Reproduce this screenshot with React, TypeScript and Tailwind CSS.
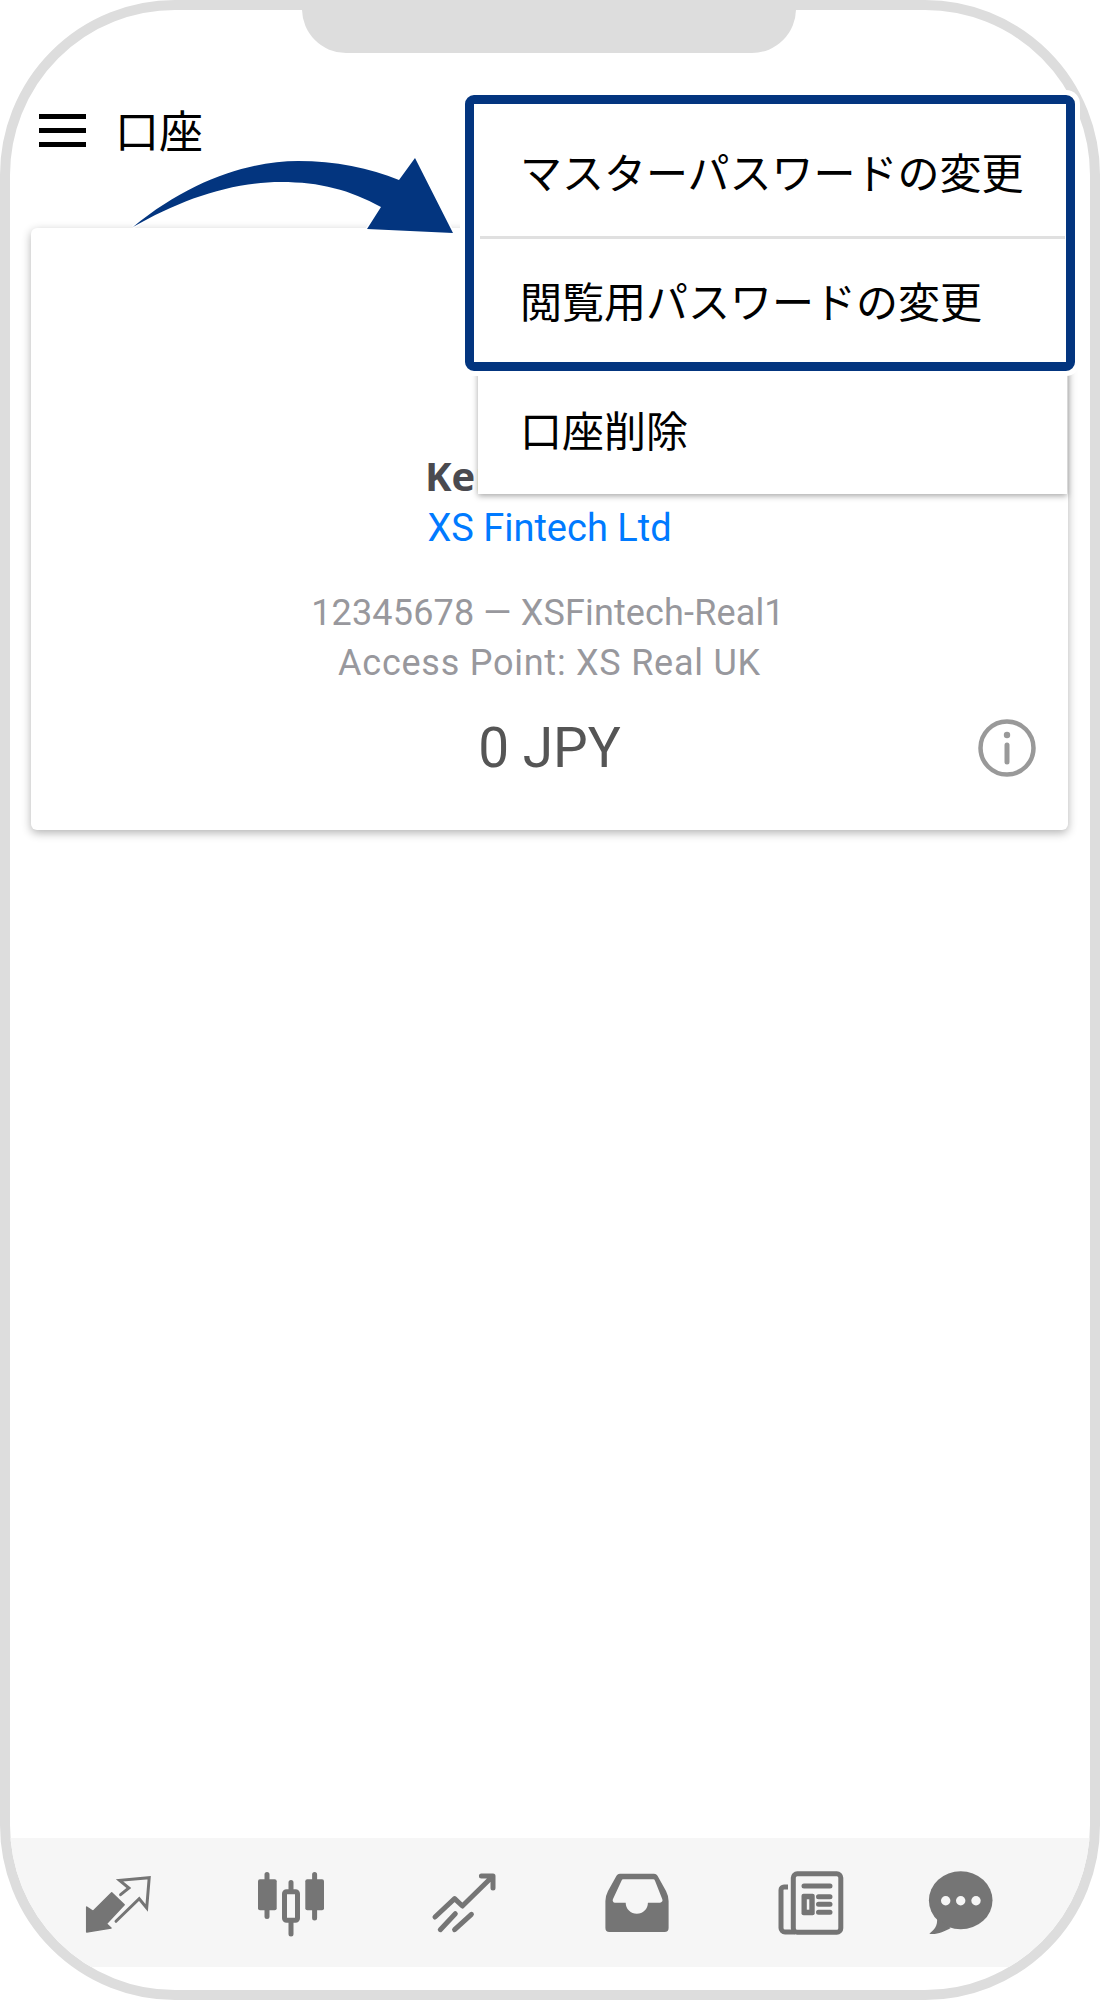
const ICON = '#757575';
const BAR_BG = '#f6f6f6';

function TradeIcon() {
  return (
    <svg viewBox="0 0 70 70" className="h-[70px] w-[70px]">
      <path
        d="M3.7 64V39l6.4 4.3L28.7 24.7l12.5 12L23.4 55.7 28 60Z"
        fill={ICON}
        stroke={ICON}
        strokeWidth="1.5"
        strokeLinejoin="round"
      />
      <path
        d="M37.6 26.7 45.9 20 36.6 12.3 66.2 9.7 63.7 40 56.2 30.7 33 53.3"
        fill="none"
        stroke={ICON}
        strokeWidth="3"
        strokeLinecap="round"
      />
    </svg>
  );
}

function ChartIcon() {
  return (
    <svg viewBox="0 0 70 70" className="h-[70px] w-[70px]">
      <path d="M11 6.500V48.500M35 14.500V66M58.600 6.500V50" stroke={ICON} strokeWidth="5" strokeLinecap="round" />
      <rect x="2" y="11.300" width="18.700" height="31" rx="2" fill={ICON} />
      <rect x="49.300" y="11.300" width="18.700" height="31" rx="2" fill={ICON} />
      <rect x="28.500" y="23.800" width="13" height="28.400" rx="2" fill={BAR_BG} stroke={ICON} strokeWidth="5" />
    </svg>
  );
}

function TrendIcon() {
  return (
    <svg viewBox="0 0 70 70" className="h-[70px] w-[70px]" fill="none" stroke={ICON} strokeLinecap="round" strokeLinejoin="round">
      <path d="M6 49 25.600 30.700 33.400 38 63 9M52.400 8H64V20" strokeWidth="5" />
      <path d="M11.300 61.700 26.300 45.700M25.600 61.700 42.400 46.300" strokeWidth="5" />
    </svg>
  );
}

function InboxIcon() {
  return (
    <svg viewBox="0 0 70 70" className="h-[70px] w-[70px]">
      <path
        fillRule="evenodd"
        fill={ICON}
        d="M18 5.700H52a4 4 0 0 1 3.500 2L64 23q2.600 5 2.600 10V60a4 4 0 0 1-4 4H7.400a4 4 0 0 1-4-4V33q0-5 2.600-10l8.500-15.300a4 4 0 0 1 3.500-2ZM21.500 11.300a2 2 0 0 0-2 1.400L11 31a2.500 2.500 0 0 0 2 3.700H23.700a11 11 0 0 0 22.200 0H58a2.500 2.500 0 0 0 2.300-3.500L53 12.700a2 2 0 0 0-2-1.400Z"
      />
    </svg>
  );
}

function NewsIcon() {
  return (
    <svg viewBox="0 0 70 70" className="h-[70px] w-[70px]" fill="none" stroke={ICON} strokeWidth="5" strokeLinecap="round">
      <rect x="18.300" y="5.800" width="47.500" height="58.400" rx="4" />
      <path d="M13 19H9a3 3 0 0 0-3 3V60a4 4 0 0 0 4 4H20" strokeLinecap="butt" />
      <path d="M29 18H55M43.500 28.700H55M43.500 36.300H55M43.500 44.300H55" />
      <rect x="26.500" y="25.700" width="13.200" height="21.600" rx="2" fill={ICON} stroke="none" />
      <rect x="31.800" y="31.300" width="2.500" height="10.400" fill={BAR_BG} stroke="none" />
    </svg>
  );
}

function ChatIcon() {
  return (
    <svg viewBox="0 0 70 70" className="h-[70px] w-[70px]">
      <ellipse cx="34.700" cy="32.300" rx="31.800" ry="29" fill={ICON} />
      <path d="M11 50C12 58 8 62 3.300 65.700 10 67 18 64 24.700 60Z" fill={ICON} />
      <circle cx="19.700" cy="32.700" r="4.700" fill={BAR_BG} />
      <circle cx="34.700" cy="32.700" r="4.700" fill={BAR_BG} />
      <circle cx="50" cy="32.700" r="4.700" fill={BAR_BG} />
    </svg>
  );
}

function InfoIcon() {
  return (
    <svg viewBox="0 0 58 58" className="h-[58px] w-[58px]" fill="none" stroke="#999999">
      <circle cx="29" cy="29" r="26.500" strokeWidth="4.500" />
      <path d="M29 26V43" strokeWidth="5" strokeLinecap="round" />
      <circle cx="29" cy="16" r="3.200" fill="#999999" stroke="none" />
    </svg>
  );
}

const navIcons = [TradeIcon, ChartIcon, TrendIcon, InboxIcon, NewsIcon, ChatIcon];

export default function App() {
  return (
    <div className="relative h-[2000px] w-[1100px] bg-white font-['Roboto','Noto_Sans_CJK_JP',sans-serif]">
      <div className="relative flex h-full flex-col overflow-hidden rounded-[175px] border-[10px] border-[#dddddd] bg-white">
        {/* notch */}
        <div className="absolute left-[292px] top-[-10px] h-[53px] w-[494px] rounded-b-[44px] bg-[#dddddd]" />

        <div className="mb-[76px] ml-[29px] mt-[98px] flex h-[44px] items-center gap-[29px]">
          <div className="flex w-[47px] flex-col gap-[9px]">
            <div className="h-[5px] bg-black" />
            <div className="h-[5px] bg-black" />
            <div className="h-[5px] bg-black" />
          </div>
          <span className="pt-[6px] text-[44px] leading-[44px] text-black">口座</span>
        </div>

        {/* account card */}
        <div className="ml-[21px] mr-[22px] flex h-[602px] flex-col items-center rounded-[6px] bg-white pt-[220px] text-center shadow-[0_3px_10px_rgba(0,0,0,0.3)]">
          <div className="font-['Open_Sans'] text-[40px] font-bold leading-[55px] text-[#4a4a4f]">Ken Yamada</div>
          <div className="text-[38px] leading-[50px] text-[#007aff]">XS Fintech Ltd</div>
          <div className="mt-[35px] pr-[3px] text-[36px] leading-[50px] tracking-[0.15px] text-[#98989d]">12345678 — XSFintech-Real1</div>
          <div className="text-[36px] leading-[50px] tracking-[0.75px] text-[#98989d]">Access Point: XS Real UK</div>
          <div className="mt-[28px] grid w-full grid-cols-[1fr_auto_1fr] items-center pr-[32px]">
            <div />
            <div className="pl-[32px] text-[55px] leading-[64px] text-[#555555]">0 JPY</div>
            <div className="justify-self-end">
              <InfoIcon />
            </div>
          </div>
        </div>

        <div className="mb-[23px] mt-auto grid h-[129px] grid-cols-[repeat(5,173px)_130px] items-center bg-[#f6f6f6] px-[21px]">
          {navIcons.map((Icon, i) => (
            <div key={i} className="flex justify-center">
              <Icon />
            </div>
          ))}
        </div>
      </div>

      {/* open menu */}
      <div className="absolute left-[478px] top-[106px] w-[589px] text-[42px] text-black">
        <div className="-mx-[4px] bg-white px-[4px]">
          <div className="flex h-[130px] items-center pl-[42px] pt-[6px]">マスターパスワードの変更</div>
          <div className="mx-[2px] h-[2.500px] bg-[#e0e0e0]" />
          <div className="flex h-[129px] items-center pl-[42px]">閲覧用パスワードの変更</div>
        </div>
        <div className="flex h-[126px] items-center bg-white pl-[42px] pt-[4px] shadow-[0_2px_6px_rgba(0,0,0,0.35)]">口座削除</div>
      </div>

      {/* callout box round the first two items */}
      <div className="absolute left-[465px] top-[95px] h-[276px] w-[610px] rounded-[9px] border-[9px] border-[#03357f] shadow-[0_0_0_5px_#ffffff]" />

      {/* callout arrow */}
      <svg viewBox="130 155 330 85" className="absolute left-[130px] top-[155px] h-[85px] w-[330px]">
        <path
          d="M133 227C190 180 250 161 298 161C335 161 370 168 399 180L415 158L453 233L367 229L381 207C350 190 320 182 281 182C230 182 180 200 133 227Z"
          fill="#03357f"
          stroke="#ffffff"
          strokeWidth="3"
          paintOrder="stroke"
        />
      </svg>
    </div>
  );
}
